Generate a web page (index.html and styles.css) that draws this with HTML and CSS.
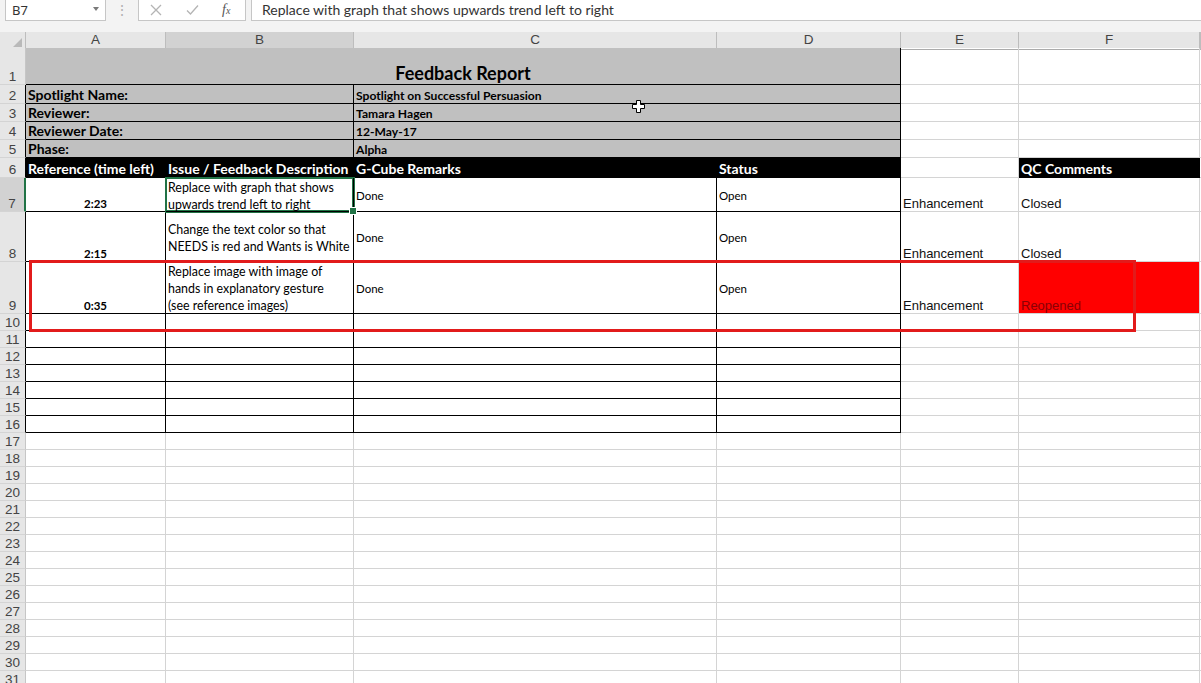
FILE: index.html
```html
<!DOCTYPE html>
<html>
<head>
<meta charset="utf-8">
<title>Feedback Report</title>
<link rel="stylesheet" href="styles.css">
</head>
<body>
<div class="app">
  <div class="toolbar">
    <div class="namebox"><span>B7</span><span class="nb-arrow"></span></div>
    <div class="grip">⋮</div>
    <div class="fxbtns">
      <svg class="ico" width="12" height="12" viewBox="0 0 12 12"><path d="M1 1L11 11M11 1L1 11" stroke="#b4b4b4" stroke-width="1.3" fill="none"/></svg>
      <svg class="ico" width="13" height="12" viewBox="0 0 13 12"><path d="M1 6.5L4.5 10L12 1.5" stroke="#b4b4b4" stroke-width="1.3" fill="none"/></svg>
      <span class="fx">f<small>x</small></span>
    </div>
    <div class="formula">Replace with graph that shows upwards trend left to right</div>
  </div>
  <div class="gap"></div>
  <div class="colhdr">
    <div class="corner"><svg width="9" height="9" viewBox="0 0 9 9"><path d="M9 0V9H0Z" fill="#b9b9b9"/></svg></div>
    <div class="ch">A</div>
    <div class="ch sel">B</div>
    <div class="ch">C</div>
    <div class="ch">D</div>
    <div class="ch">E</div>
    <div class="ch">F</div>
    <div class="ch"></div>
  </div>
  <div class="sheet">
    <!-- row 1 -->
    <div class="rh">1</div>
    <div class="c grey k title span4">Feedback Report</div>
    <div class="c"></div><div class="c"></div><div class="c"></div>
    <!-- rows 2-5 -->
    <div class="rh edge">2</div>
    <div class="c grey k lbl span2">Spotlight Name:</div>
    <div class="c grey k val span2">Spotlight on Successful Persuasion</div>
    <div class="c"></div><div class="c"></div><div class="c"></div>
    <div class="rh edge">3</div>
    <div class="c grey k lbl span2">Reviewer:</div>
    <div class="c grey k val span2">Tamara Hagen</div>
    <div class="c"></div><div class="c"></div><div class="c"></div>
    <div class="rh edge">4</div>
    <div class="c grey k lbl span2">Reviewer Date:</div>
    <div class="c grey k val span2">12-May-17</div>
    <div class="c"></div><div class="c"></div><div class="c"></div>
    <div class="rh edge">5</div>
    <div class="c grey k lbl span2">Phase:</div>
    <div class="c grey k val span2">Alpha</div>
    <div class="c"></div><div class="c"></div><div class="c"></div>
    <!-- row 6 -->
    <div class="rh edge">6</div>
    <div class="c blk">Reference (time left)</div>
    <div class="c blk">Issue / Feedback Description</div>
    <div class="c blk">G-Cube Remarks</div>
    <div class="c blk">Status</div>
    <div class="c"></div>
    <div class="c blk">QC Comments</div>
    <div class="c"></div>
    <!-- row 7 -->
    <div class="rh edge sel">7</div>
    <div class="c k ta">2:23</div>
    <div class="c k tb active">Replace with graph that shows<br>upwards trend left to right</div>
    <div class="c k tc">Done</div>
    <div class="c k tc">Open</div>
    <div class="c te">Enhancement</div>
    <div class="c te">Closed</div>
    <div class="c"></div>
    <!-- row 8 -->
    <div class="rh edge">8</div>
    <div class="c k ta">2:15</div>
    <div class="c k tb">Change the text color so that<br>NEEDS is red and Wants is White</div>
    <div class="c k tc">Done</div>
    <div class="c k tc">Open</div>
    <div class="c te">Enhancement</div>
    <div class="c te">Closed</div>
    <div class="c"></div>
    <!-- row 9 -->
    <div class="rh edge">9</div>
    <div class="c k ta">0:35</div>
    <div class="c k tb">Replace image with image of<br>hands in explanatory gesture<br>(see reference images)</div>
    <div class="c k tc">Done</div>
    <div class="c k tc">Open</div>
    <div class="c te">Enhancement</div>
    <div class="c te flag">Reopened</div>
    <div class="c"></div>
    <!-- rows 10-16 -->
    <div class="rh edge">10</div><div class="c k"></div><div class="c k"></div><div class="c k"></div><div class="c k"></div><div class="c"></div><div class="c"></div><div class="c"></div>
    <div class="rh edge">11</div><div class="c k"></div><div class="c k"></div><div class="c k"></div><div class="c k"></div><div class="c"></div><div class="c"></div><div class="c"></div>
    <div class="rh edge">12</div><div class="c k"></div><div class="c k"></div><div class="c k"></div><div class="c k"></div><div class="c"></div><div class="c"></div><div class="c"></div>
    <div class="rh edge">13</div><div class="c k"></div><div class="c k"></div><div class="c k"></div><div class="c k"></div><div class="c"></div><div class="c"></div><div class="c"></div>
    <div class="rh edge">14</div><div class="c k"></div><div class="c k"></div><div class="c k"></div><div class="c k"></div><div class="c"></div><div class="c"></div><div class="c"></div>
    <div class="rh edge">15</div><div class="c k"></div><div class="c k"></div><div class="c k"></div><div class="c k"></div><div class="c"></div><div class="c"></div><div class="c"></div>
    <div class="rh edge">16</div><div class="c k"></div><div class="c k"></div><div class="c k"></div><div class="c k"></div><div class="c"></div><div class="c"></div><div class="c"></div>
    <!-- rows 17-31 -->
    <div class="rh">17</div><div class="c"></div><div class="c"></div><div class="c"></div><div class="c"></div><div class="c"></div><div class="c"></div><div class="c"></div>
    <div class="rh">18</div><div class="c"></div><div class="c"></div><div class="c"></div><div class="c"></div><div class="c"></div><div class="c"></div><div class="c"></div>
    <div class="rh">19</div><div class="c"></div><div class="c"></div><div class="c"></div><div class="c"></div><div class="c"></div><div class="c"></div><div class="c"></div>
    <div class="rh">20</div><div class="c"></div><div class="c"></div><div class="c"></div><div class="c"></div><div class="c"></div><div class="c"></div><div class="c"></div>
    <div class="rh">21</div><div class="c"></div><div class="c"></div><div class="c"></div><div class="c"></div><div class="c"></div><div class="c"></div><div class="c"></div>
    <div class="rh">22</div><div class="c"></div><div class="c"></div><div class="c"></div><div class="c"></div><div class="c"></div><div class="c"></div><div class="c"></div>
    <div class="rh">23</div><div class="c"></div><div class="c"></div><div class="c"></div><div class="c"></div><div class="c"></div><div class="c"></div><div class="c"></div>
    <div class="rh">24</div><div class="c"></div><div class="c"></div><div class="c"></div><div class="c"></div><div class="c"></div><div class="c"></div><div class="c"></div>
    <div class="rh">25</div><div class="c"></div><div class="c"></div><div class="c"></div><div class="c"></div><div class="c"></div><div class="c"></div><div class="c"></div>
    <div class="rh">26</div><div class="c"></div><div class="c"></div><div class="c"></div><div class="c"></div><div class="c"></div><div class="c"></div><div class="c"></div>
    <div class="rh">27</div><div class="c"></div><div class="c"></div><div class="c"></div><div class="c"></div><div class="c"></div><div class="c"></div><div class="c"></div>
    <div class="rh">28</div><div class="c"></div><div class="c"></div><div class="c"></div><div class="c"></div><div class="c"></div><div class="c"></div><div class="c"></div>
    <div class="rh">29</div><div class="c"></div><div class="c"></div><div class="c"></div><div class="c"></div><div class="c"></div><div class="c"></div><div class="c"></div>
    <div class="rh">30</div><div class="c"></div><div class="c"></div><div class="c"></div><div class="c"></div><div class="c"></div><div class="c"></div><div class="c"></div>
    <div class="rh">31</div><div class="c"></div><div class="c"></div><div class="c"></div><div class="c"></div><div class="c"></div><div class="c"></div><div class="c"></div>

    <div class="redbox"></div>
  </div>
  <svg class="cursor" width="15" height="15" viewBox="0 0 15 15"><path d="M5.5 1.5h4v4h4v4h-4v4h-4v-4h-4v-4h4z" fill="#fff" stroke="#000" stroke-width="1"/></svg>
</div>
</body>
</html>
```
FILE: styles.css
```css
* { box-sizing: border-box; }
html, body { margin: 0; padding: 0; background: #fff; }
body {
  width: 1201px;
  height: 683px;
  overflow: hidden;
  font-family: "Liberation Sans", Arial, sans-serif;
}
.app { position: relative; --cols: 26px 140px 188px 363px 184px 118px 181px 1fr; }

/* formula bar */
.toolbar {
  height: 22px;
  background: #f3f3f3;
  display: flex;
}
.namebox {
  margin-left: 5px;
  width: 101px;
  height: 21px;
  background: #fff;
  border: 1px solid #c6c6c6;
  border-top: none;
  display: flex;
  align-items: center;
  justify-content: space-between;
  padding: 0 6px 0 6px;
  font-family: "Noto Sans", sans-serif;
  font-size: 13px;
  color: #333;
}
.nb-arrow {
  width: 0; height: 0;
  border-left: 3.5px solid transparent;
  border-right: 3.5px solid transparent;
  border-top: 4px solid #7a7a7a;
  margin-bottom: 3px;
}
.grip {
  width: 32px;
  text-align: center;
  color: #b0b0b0;
  font-size: 14px;
  line-height: 20px;
}
.fxbtns {
  width: 108px;
  height: 21px;
  background: #fff;
  border: 1px solid #c6c6c6;
  border-top: none;
  display: flex;
  align-items: center;
  padding-left: 11px;
  gap: 24px;
}
.fx {
  font-family: "Liberation Serif", serif;
  font-style: italic;
  font-size: 14px;
  color: #555;
  margin-left: -1px;
}
.fx small { font-size: 10px; }
.formula {
  flex: 1;
  margin-left: 5px;
  height: 21px;
  background: #fff;
  border-left: 1px solid #c6c6c6;
  border-bottom: 1px solid #c6c6c6;
  padding-left: 10px;
  font-family: Lato, sans-serif;
  font-size: 14px;
  line-height: 19px;
  color: #333;
  white-space: nowrap;
}
.gap { height: 10px; background: #f3f3f3; }

/* column headers */
.colhdr {
  display: grid;
  grid-template-columns: var(--cols);
  height: 16px;
  background: #e6e6e6;
}
.corner {
  border-right: 1px solid #bdbdbd;
  border-bottom: 1px solid #ababab;
  display: flex;
  align-items: flex-end;
  justify-content: flex-end;
  padding: 0 3px 2px 0;
}
.ch {
  border-right: 1px solid #bdbdbd;
  border-bottom: 1px solid #ababab;
  text-align: center;
  font-size: 13.5px;
  line-height: 16px;
  color: #444;
}
.ch.sel {
  background: #d2d2d2;
  border-bottom: 2px solid #217346;
}

/* grid */
.sheet {
  position: relative;
  display: grid;
  grid-template-columns: var(--cols);
  grid-template-rows: 37px 19px 18px 18px 18px 20px 34px 50px 52px repeat(22, 17px);
}
.rh {
  background: #e6e6e6;
  border-right: 1px solid #c6c6c6;
  border-bottom: 1px solid #d4d4d4;
  display: flex;
  align-items: flex-end;
  justify-content: center;
  font-size: 13.5px;
  line-height: 15px;
  color: #444;
  padding-bottom: 0;
}
.rh.edge { border-right-color: #000; }
.rh.sel {
  background: #d2d2d2;
  border-right: 2px solid #217346;
}
.c {
  border-right: 1px solid #d4d4d4;
  border-bottom: 1px solid #d4d4d4;
  display: flex;
  align-items: flex-end;
  padding: 0 2px 0 2px;
  overflow: hidden;
  white-space: nowrap;
  font-size: 13px;
  line-height: 16px;
  color: #000;
  min-width: 0;
}
.k { border-right-color: #000; border-bottom-color: #000; }
.grey { background: #c0c0c0; }
.span4 { grid-column: span 4; }
.span2 { grid-column: span 2; }
.title {
  justify-content: center;
  font-family: Lato, sans-serif;
  font-weight: bold;
  font-size: 18px;
  line-height: 20px;
  padding-bottom: 1px;
}
.lbl {
  font-family: Lato, sans-serif;
  font-weight: bold;
  font-size: 14px;
  line-height: 16px;
}
.val {
  font-family: Lato, sans-serif;
  font-weight: bold;
  font-size: 12.1px;
  line-height: 15px;
}
.blk {
  background: #000;
  border-right-color: #000;
  border-bottom-color: #000;
  color: #fff;
  font-family: Lato, sans-serif;
  font-weight: bold;
  font-size: 14px;
  line-height: 17px;
}
.ta {
  justify-content: center;
  font-family: Lato, sans-serif;
  font-weight: bold;
  font-size: 11.5px;
  line-height: 14px;
}
.tb {
  align-items: center;
  font-family: Lato, sans-serif;
  font-size: 12.4px;
  line-height: 17px;
  padding-top: 2px;
}
.tc {
  align-items: center;
  font-family: Lato, sans-serif;
  font-size: 11.5px;
  line-height: 15px;
  padding-top: 2px;
}
.te {
  font-size: 13px;
  line-height: 14px;
  color: #111;
}
.flag { background: #ff0000; color: #8a0005; }

.active {
  position: relative;
  z-index: 3;
  overflow: visible;
  box-shadow: 0 0 0 1px #217346, inset 0 0 0 1px #217346;
}
.active::after {
  content: "";
  position: absolute;
  right: -4px;
  bottom: -4px;
  width: 6px;
  height: 6px;
  background: #217346;
  border: 1px solid #fff;
}

.redbox {
  position: absolute;
  left: 29px;
  top: 212px;
  width: 1107px;
  height: 72px;
  border: 3px solid #e21b1b;
  z-index: 5;
}
.cursor {
  position: absolute;
  left: 631px;
  top: 99px;
  z-index: 6;
}
```
